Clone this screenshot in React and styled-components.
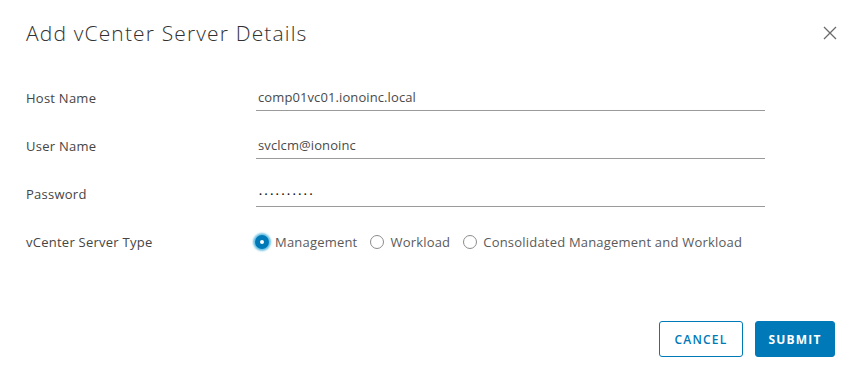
import React from "react";
import styled, { createGlobalStyle } from "styled-components";

const Global = createGlobalStyle`
  html, body { margin: 0; padding: 0; background: #fff; }
  body { font-family: "Open Sans", Lato, sans-serif; color: #333; }
  * { box-sizing: border-box; }
`;

const Dialog = styled.div`
  width: 861px;
  height: 379px;
  padding: 18px 24px 0 26px;
  display: flex;
  flex-direction: column;
`;

const Header = styled.div`
  display: flex;
  justify-content: space-between;
  align-items: center;
  height: 30px;
`;

const Title = styled.h2`
  margin: 0;
  font-size: 21px;
  font-weight: 300;
  color: #313131;
  letter-spacing: 1.15px;
`;

const CloseButton = styled.button`
  border: none;
  background: none;
  padding: 0;
  width: 14px;
  height: 14px;
  display: flex;
  cursor: pointer;
`;

const Form = styled.div`
  margin-top: 34px;
  display: flex;
  flex-direction: column;
  gap: 16px;
`;

const Row = styled.div`
  display: grid;
  grid-template-columns: 230px 509px;
  align-items: center;
  height: 32px;
`;

const Label = styled.label`
  font-size: 13px;
  letter-spacing: 0.25px;
  color: #454545;
`;

const Input = styled.input`
  border: none;
  border-bottom: 1px solid #9a9a9a;
  height: 26px;
  padding: 0 0 2px 2px;
  font-family: "Open Sans", sans-serif;
  font-size: 13px;
  letter-spacing: 0.1px;
  color: #4a4a4a;
  outline: none;
  width: 100%;
  background: transparent;
`;

const PasswordInput = styled(Input)`
  font-size: 8px;
  letter-spacing: 2.6px;
  padding-bottom: 1px;
  padding-left: 3px;
  color: #222;
`;

const RadioGroup = styled.div`
  display: flex;
  align-items: center;
  gap: 13px;
  margin-left: -1px;
`;

const RadioItem = styled.label`
  display: flex;
  align-items: center;
  gap: 6px;
  font-size: 13px;
  letter-spacing: 0.2px;
  color: #5a5a5a;
`;

const RadioCircle = styled.span`
  width: 14px;
  height: 14px;
  border-radius: 50%;
  flex: none;
  border: ${(p) => (p.checked ? "5px solid #0079b8" : "1px solid #8c8c8c")};
  background: #fff;
  box-shadow: ${(p) => (p.checked ? "0 0 2px 2px #6bc1e3" : "none")};
`;

const Footer = styled.div`
  margin-top: auto;
  margin-bottom: 22px;
  display: flex;
  justify-content: flex-end;
  gap: 12px;
  padding-right: 2px;
`;

const Button = styled.button`
  height: 36px;
  padding: 0 12px;
  border-radius: 3px;
  border: 1px solid #0079b8;
  background: ${(p) => (p.primary ? "#0079b8" : "#fff")};
  color: ${(p) => (p.primary ? "#fff" : "#0079b8")};
  font-family: "Open Sans", sans-serif;
  font-size: 12px;
  font-weight: ${(p) => (p.primary ? 700 : 600)};
  letter-spacing: 1.2px;
  min-width: ${(p) => (p.primary ? "80px" : "84px")};
  cursor: pointer;
`;

export default function App() {
  return (
    <>
      <Global />
      <Dialog>
        <Header>
          <Title>Add vCenter Server Details</Title>
          <CloseButton aria-label="Close">
            <svg width="14" height="14" viewBox="0 0 14 14">
              <path d="M1 1 L13 13 M13 1 L1 13" stroke="#6a6a6a" strokeWidth="1.3" fill="none" />
            </svg>
          </CloseButton>
        </Header>
        <Form>
          <Row>
            <Label>Host Name</Label>
            <Input defaultValue="comp01vc01.ionoinc.local" />
          </Row>
          <Row>
            <Label>User Name</Label>
            <Input defaultValue="svclcm@ionoinc" />
          </Row>
          <Row>
            <Label>Password</Label>
            <PasswordInput type="password" defaultValue="abcdefghij" />
          </Row>
          <Row>
            <Label>vCenter Server Type</Label>
            <RadioGroup>
              <RadioItem>
                <RadioCircle checked />
                Management
              </RadioItem>
              <RadioItem>
                <RadioCircle />
                Workload
              </RadioItem>
              <RadioItem>
                <RadioCircle />
                Consolidated Management and Workload
              </RadioItem>
            </RadioGroup>
          </Row>
        </Form>
        <Footer>
          <Button>CANCEL</Button>
          <Button primary>SUBMIT</Button>
        </Footer>
      </Dialog>
    </>
  );
}
